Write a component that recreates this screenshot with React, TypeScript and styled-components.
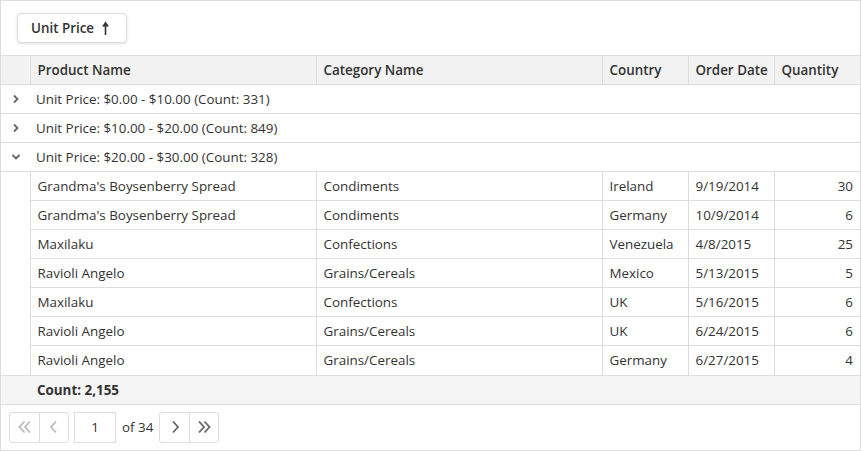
import React from "react";
import styled, { createGlobalStyle } from "styled-components";

const Global = createGlobalStyle`
  html, body { margin: 0; padding: 0; background: #fff; }
  body { font-family: "Open Sans", "Noto Sans", sans-serif; font-size: 13.4px; color: #333; }
  * { box-sizing: border-box; }
`;

const Grid = styled.div`
  width: 861px;
  height: 451px;
  border: 1px solid #ddd;
  display: flex;
  flex-direction: column;
`;

const HeaderPanel = styled.div`
  height: 54px;
  display: flex;
  align-items: center;
  padding-left: 16px;
`;

const GroupChip = styled.button`
  height: 30px;
  width: 110px;
  display: flex;
  align-items: center;
  gap: 7px;
  padding: 0 0 0 13px;
  border: 1px solid #ddd;
  border-radius: 4px;
  background: #fff;
  box-shadow: 0 1px 3px rgba(0, 0, 0, 0.12);
  font-family: inherit;
  font-size: 13.4px;
  font-weight: 600;
  color: #333;
`;

const Table = styled.table`
  width: 859px;
  border-collapse: collapse;
  table-layout: fixed;
`;

const HeadRow = styled.tr`
  background: #f2f2f2;
  border-top: 1px solid #ddd;
  border-bottom: 1px solid #ddd;
`;

const Th = styled.th<{ $first?: boolean }>`
  height: 29px;
  padding: 0 7px;
  text-align: left;
  font-weight: 600;
  color: #333;
  border-left: ${(p) => (p.$first ? "none" : "1px solid #ddd")};
  white-space: nowrap;
  overflow: hidden;
`;

const GroupRow = styled.tr`
  border-bottom: 1px solid #ddd;
`;

const ExpandCell = styled.td`
  height: 29px;
  padding: 0;
  text-align: center;
  vertical-align: middle;
`;

const GroupText = styled.td`
  padding: 0 6px;
  white-space: nowrap;
`;

const DataRow = styled.tr``;

const EmptyCell = styled.td`
  height: 29px;
  padding: 0;
  border-right: 1px solid #ddd;
`;

const Td = styled.td<{ $right?: boolean; $last?: boolean }>`
  height: 29px;
  padding: 0 7px;
  text-align: ${(p) => (p.$right ? "right" : "left")};
  border-bottom: ${(p) => (p.$last ? "none" : "1px solid #ddd")};
  border-left: 1px solid #ddd;
  white-space: nowrap;
  overflow: hidden;
`;

const Footer = styled.div`
  height: 30px;
  background: #f5f5f5;
  border-top: 1px solid #ddd;
  border-bottom: 1px solid #ddd;
  display: flex;
  align-items: center;
  padding-left: 36px;
  font-weight: 700;
`;

const Pager = styled.div`
  flex: 1;
  display: flex;
  align-items: center;
  padding-left: 8px;
  gap: 5px;
`;

const BtnGroup = styled.div`
  display: flex;
  border: 1px solid #ddd;
  border-radius: 3px;
  height: 31px;
`;

const PagerBtn = styled.div<{ $disabled?: boolean; $sep?: boolean }>`
  width: 29px;
  display: flex;
  align-items: center;
  justify-content: center;
  color: ${(p) => (p.$disabled ? "#bbb" : "#666")};
  border-left: ${(p) => (p.$sep ? "1px solid #ddd" : "none")};
`;

const PageInput = styled.div`
  width: 42px;
  height: 31px;
  border: 1px solid #ddd;
  display: flex;
  align-items: center;
  justify-content: center;
`;

const PageInfo = styled.span`
  margin: 0 1px;
`;

const ChevronRight = () => (
  <svg width="10" height="10" viewBox="0 0 10 10">
    <path d="M3 1.5 L6.5 5 L3 8.5" fill="none" stroke="#666" strokeWidth="1.8" />
  </svg>
);
const ChevronDown = () => (
  <svg width="10" height="10" viewBox="0 0 10 10">
    <path d="M1.5 3 L5 6.5 L8.5 3" fill="none" stroke="#666" strokeWidth="1.8" />
  </svg>
);

const ArrowUp = () => (
  <svg width="9" height="14" viewBox="0 0 9 14">
    <path d="M4.5 4 V14" stroke="#333" strokeWidth="1.6" />
    <path d="M1 5.5 L4.5 0.5 L8 5.5 Z" fill="#333" />
  </svg>
);

const Single = ({ dir }: { dir: "l" | "r" }) => (
  <svg width="12" height="14" viewBox="0 0 12 14">
    <path
      d={dir === "l" ? "M8 1.5 L3 7 L8 12.5" : "M4 1.5 L9 7 L4 12.5"}
      fill="none"
      stroke="currentColor"
      strokeWidth="1.8"
    />
  </svg>
);
const Double = ({ dir }: { dir: "l" | "r" }) => (
  <svg width="16" height="14" viewBox="0 0 16 14">
    {dir === "l" ? (
      <>
        <path d="M7.5 1.5 L2.5 7 L7.5 12.5" fill="none" stroke="currentColor" strokeWidth="1.8" />
        <path d="M13 1.5 L8 7 L13 12.5" fill="none" stroke="currentColor" strokeWidth="1.8" />
      </>
    ) : (
      <>
        <path d="M3 1.5 L8 7 L3 12.5" fill="none" stroke="currentColor" strokeWidth="1.8" />
        <path d="M8.5 1.5 L13.5 7 L8.5 12.5" fill="none" stroke="currentColor" strokeWidth="1.8" />
      </>
    )}
  </svg>
);

const rows: [string, string, string, string, number][] = [
  ["Grandma's Boysenberry Spread", "Condiments", "Ireland", "9/19/2014", 30],
  ["Grandma's Boysenberry Spread", "Condiments", "Germany", "10/9/2014", 6],
  ["Maxilaku", "Confections", "Venezuela", "4/8/2015", 25],
  ["Ravioli Angelo", "Grains/Cereals", "Mexico", "5/13/2015", 5],
  ["Maxilaku", "Confections", "UK", "5/16/2015", 6],
  ["Ravioli Angelo", "Grains/Cereals", "UK", "6/24/2015", 6],
  ["Ravioli Angelo", "Grains/Cereals", "Germany", "6/27/2015", 4],
];

const groups = [
  { label: "Unit Price: $0.00 - $10.00 (Count: 331)", open: false },
  { label: "Unit Price: $10.00 - $20.00 (Count: 849)", open: false },
  { label: "Unit Price: $20.00 - $30.00 (Count: 328)", open: true },
];

export default function App() {
  return (
    <>
      <Global />
      <Grid>
        <HeaderPanel>
          <GroupChip>
            Unit Price <ArrowUp />
          </GroupChip>
        </HeaderPanel>
        <Table>
          <colgroup>
            <col style={{ width: 29 }} />
            <col style={{ width: 286 }} />
            <col style={{ width: 286 }} />
            <col style={{ width: 86 }} />
            <col style={{ width: 86 }} />
            <col style={{ width: 86 }} />
          </colgroup>
          <thead>
            <HeadRow>
              <Th $first />
              <Th>Product Name</Th>
              <Th>Category Name</Th>
              <Th>Country</Th>
              <Th>Order Date</Th>
              <Th>Quantity</Th>
            </HeadRow>
          </thead>
          <tbody>
            {groups.map((g) => (
              <React.Fragment key={g.label}>
                <GroupRow>
                  <ExpandCell>{g.open ? <ChevronDown /> : <ChevronRight />}</ExpandCell>
                  <GroupText colSpan={5}>{g.label}</GroupText>
                </GroupRow>
                {g.open &&
                  rows.map((r, i) => {
                    const last = i === rows.length - 1;
                    return (
                      <DataRow key={i}>
                        <EmptyCell />
                        <Td $last={last}>{r[0]}</Td>
                        <Td $last={last}>{r[1]}</Td>
                        <Td $last={last}>{r[2]}</Td>
                        <Td $last={last}>{r[3]}</Td>
                        <Td $last={last} $right>
                          {r[4]}
                        </Td>
                      </DataRow>
                    );
                  })}
              </React.Fragment>
            ))}
          </tbody>
        </Table>
        <Footer>Count: 2,155</Footer>
        <Pager>
          <BtnGroup>
            <PagerBtn $disabled>
              <Double dir="l" />
            </PagerBtn>
            <PagerBtn $disabled $sep>
              <Single dir="l" />
            </PagerBtn>
          </BtnGroup>
          <PageInput>1</PageInput>
          <PageInfo>of 34</PageInfo>
          <BtnGroup>
            <PagerBtn>
              <Single dir="r" />
            </PagerBtn>
            <PagerBtn $sep>
              <Double dir="r" />
            </PagerBtn>
          </BtnGroup>
        </Pager>
      </Grid>
    </>
  );
}
